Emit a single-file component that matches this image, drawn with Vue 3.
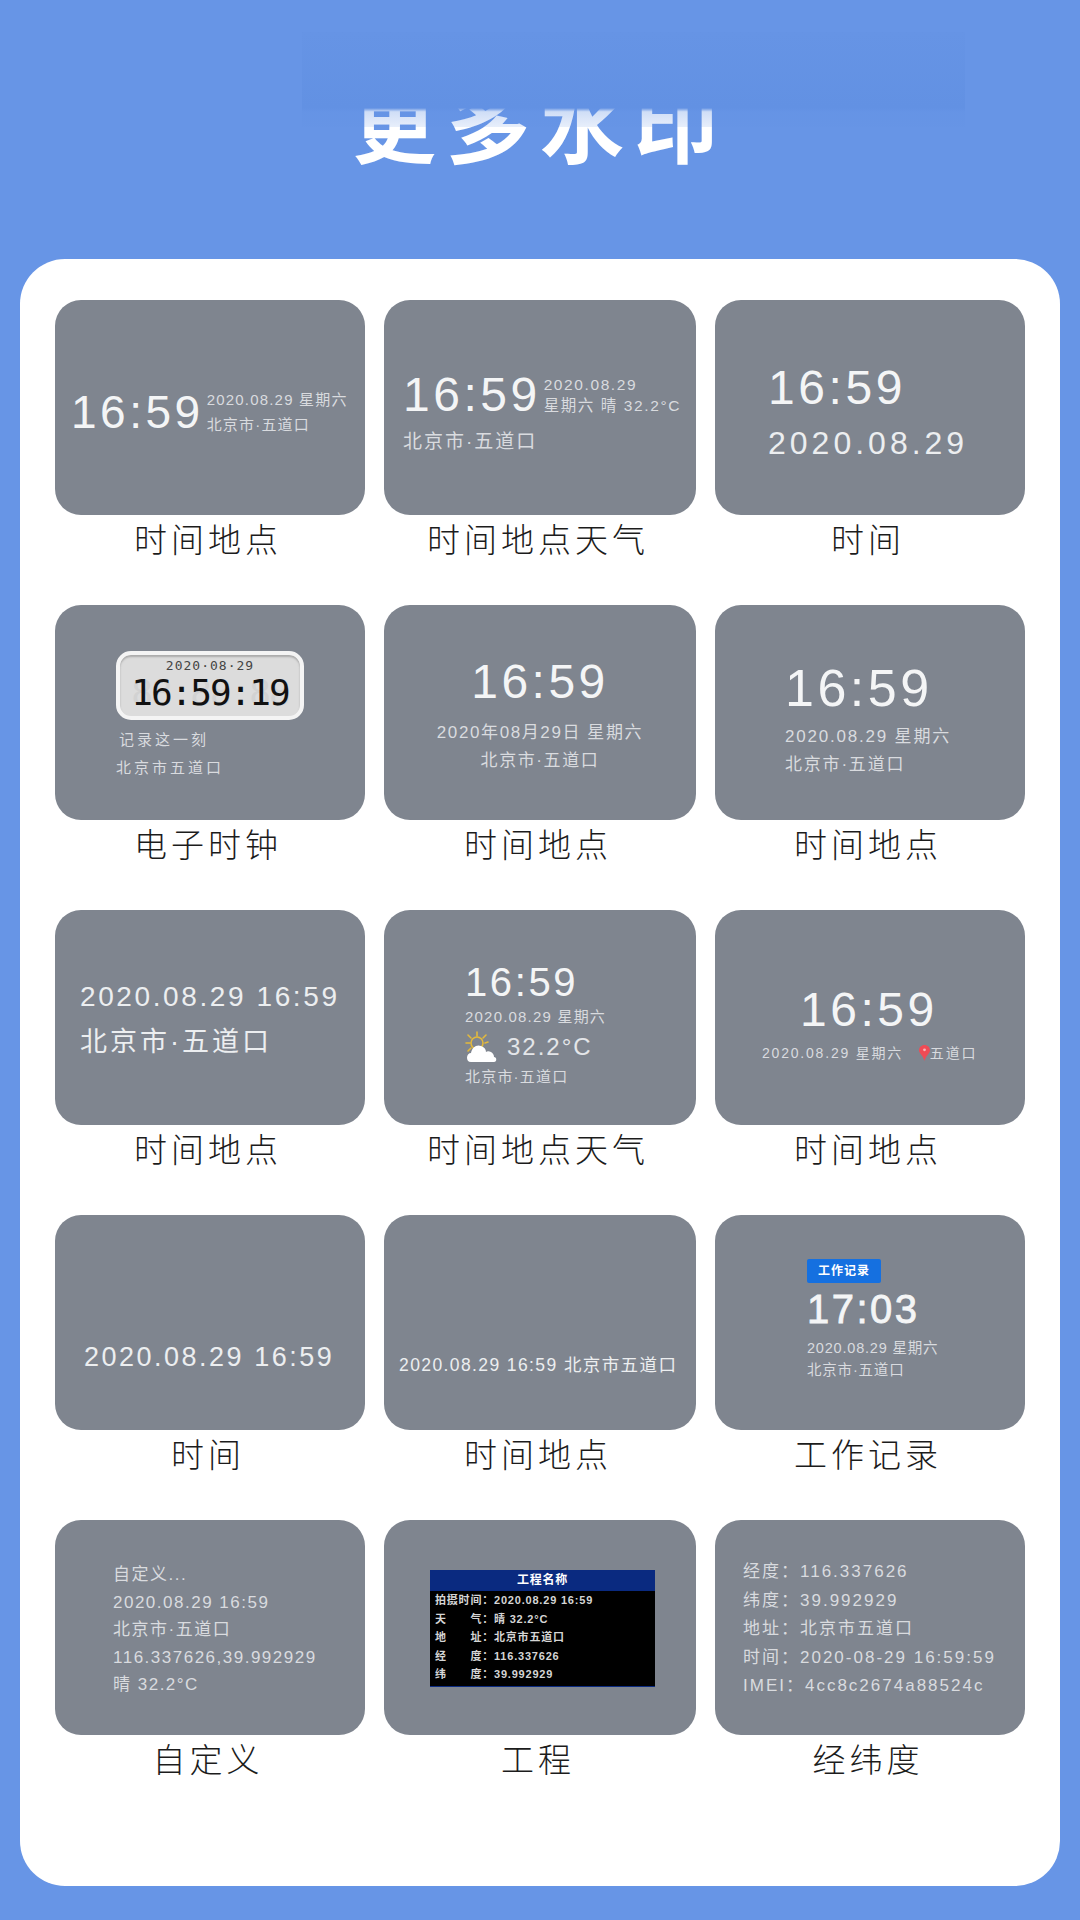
<template>
  <div class="page">
    <header class="head">
      <h1 class="title">更多水印</h1>
      <div class="smudge"></div>
    </header>
    <main class="panel">
      <div class="grid">
        <div class="item">
          <div class="card c1">
            <span class="time">16:59</span>
            <div class="side">
              <p>2020.08.29 星期六</p>
              <p>北京市·五道口</p>
            </div>
          </div>
          <p class="label">时间地点</p>
        </div>
        <div class="item">
          <div class="card c2">
            <div class="c2-top">
              <span class="time">16:59</span>
              <div class="side">
                <p>2020.08.29</p>
                <p>星期六 晴 32.2°C</p>
              </div>
            </div>
            <p class="c2-place">北京市·五道口</p>
          </div>
          <p class="label">时间地点天气</p>
        </div>
        <div class="item">
          <div class="card c3">
            <span class="time">16:59</span>
            <span class="c3-date">2020.08.29</span>
          </div>
          <p class="label">时间</p>
        </div>

        <div class="item">
          <div class="card c4">
            <div class="lcd">
              <span class="lcd-date">2020·08·29</span>
              <span class="lcd-time">16:59:19</span>
              <span class="lcd-ghost">88:88:88</span>
            </div>
            <p class="c4-note">记录这一刻</p>
            <p class="c4-place">北京市五道口</p>
          </div>
          <p class="label">电子时钟</p>
        </div>
        <div class="item">
          <div class="card c5">
            <span class="time">16:59</span>
            <p class="small">2020年08月29日 星期六</p>
            <p class="small">北京市·五道口</p>
          </div>
          <p class="label">时间地点</p>
        </div>
        <div class="item">
          <div class="card c6">
            <span class="time">16:59</span>
            <p class="small">2020.08.29 星期六</p>
            <p class="small">北京市·五道口</p>
          </div>
          <p class="label">时间地点</p>
        </div>

        <div class="item">
          <div class="card c7">
            <p>2020.08.29 16:59</p>
            <p>北京市·五道口</p>
          </div>
          <p class="label">时间地点</p>
        </div>
        <div class="item">
          <div class="card c8">
            <span class="time">16:59</span>
            <p class="small">2020.08.29 星期六</p>
            <div class="weather">
              <svg width="32" height="32" viewBox="0 0 32 32">
                <g stroke="#e3b93c" stroke-width="1.6" stroke-linecap="round">
                  <path d="M12 1v4M3 4l3 3M21 4l-3 3M1 12h4M23 11l-3 1M3 20l3-3" />
                </g>
                <circle cx="12" cy="12" r="6" fill="none" stroke="#e3b93c" stroke-width="1.6" />
                <path d="M4 31c-3 0-4-2-4-4.500s2-4.500 4-4.500c1-6 6-9 10-7 3 1 5 3 5 6 1-1 3-1 5 0s3 3 3 5c3 0 3 5 0 5z" fill="#fff" transform="translate(2 0)" />
              </svg>
              <span>32.2°C</span>
            </div>
            <p class="small">北京市·五道口</p>
          </div>
          <p class="label">时间地点天气</p>
        </div>
        <div class="item">
          <div class="card c9">
            <span class="time">16:59</span>
            <p class="small">
              2020.08.29 星期六
              <svg class="pin" width="11" height="16" viewBox="0 0 11 16">
                <path d="M5.500 0C2.400 0 0 2.300 0 5.200 0 8.500 4 10 5.500 16 7 10 11 8.500 11 5.200 11 2.300 8.600 0 5.500 0z" fill="#ef4b55" />
                <circle cx="5.500" cy="4.800" r="1.400" fill="#f7b5b8" />
              </svg>五道口
            </p>
          </div>
          <p class="label">时间地点</p>
        </div>

        <div class="item">
          <div class="card c10">
            <p>2020.08.29 16:59</p>
          </div>
          <p class="label">时间</p>
        </div>
        <div class="item">
          <div class="card c11">
            <p>2020.08.29 16:59 北京市五道口</p>
          </div>
          <p class="label">时间地点</p>
        </div>
        <div class="item">
          <div class="card c12">
            <span class="badge">工作记录</span>
            <span class="time">17:03</span>
            <p class="small">2020.08.29 星期六</p>
            <p class="small">北京市·五道口</p>
          </div>
          <p class="label">工作记录</p>
        </div>

        <div class="item">
          <div class="card c13">
            <p>自定义...</p>
            <p>2020.08.29 16:59</p>
            <p>北京市·五道口</p>
            <p>116.337626,39.992929</p>
            <p>晴 32.2°C</p>
          </div>
          <p class="label">自定义</p>
        </div>
        <div class="item">
          <div class="card c14">
            <div class="sheet">
              <div class="sheet-head">工程名称</div>
              <div v-for="row in sheetRows" :key="row.key" class="sheet-row">
                <span class="sheet-key">{{ row.key }}</span>
                <span>：{{ row.value }}</span>
              </div>
            </div>
          </div>
          <p class="label">工程</p>
        </div>
        <div class="item">
          <div class="card c15">
            <p>经度：116.337626</p>
            <p>纬度：39.992929</p>
            <p>地址：北京市五道口</p>
            <p>时间：2020-08-29 16:59:59</p>
            <p>IMEI：4cc8c2674a88524c</p>
          </div>
          <p class="label">经纬度</p>
        </div>
      </div>
    </main>
  </div>
</template>

<script setup>
const sheetRows = [
  { key: '拍摄时间', value: '2020.08.29 16:59' },
  { key: '天　　气', value: '晴 32.2°C' },
  { key: '地　　址', value: '北京市五道口' },
  { key: '经　　度', value: '116.337626' },
  { key: '纬　　度', value: '39.992929' }
]
</script>

<style>
html,
body {
  margin: 0;
  background: #6795e6;
}
</style>

<style scoped>
.page {
  width: 1080px;
  height: 1920px;
  overflow: hidden;
  background: #6795e6;
  font-family: "Liberation Sans", "Noto Sans CJK SC", sans-serif;
  color: #fff;
}

p {
  margin: 0;
}

.head {
  position: relative;
  height: 259px;
}

.title {
  margin: 0;
  padding: 80px 0 0 352px;
  font-size: 84px;
  line-height: 96px;
  letter-spacing: 10px;
  font-weight: 700;
}

.smudge {
  position: absolute;
  left: 302px;
  top: 32px;
  width: 663px;
  height: 95px;
  background: linear-gradient(#6694e5, #6291e3 80%, rgba(98, 145, 227, 0.3) 84%, rgba(98, 145, 227, 0.15));
}

.panel {
  margin: 0 20px;
  height: 1627px;
  padding: 41px 35px 0;
  box-sizing: border-box;
  background: #fff;
  border-radius: 45px;
}

.grid {
  display: grid;
  grid-template-columns: 310px 312px 310px;
  column-gap: 19px;
  row-gap: 40px;
}

.card {
  height: 215px;
  box-sizing: border-box;
  background: #7f858f;
  border-radius: 26px;
  display: flex;
  flex-direction: column;
  font-size: 14px;
  color: #d9dbdf;
}

.label {
  height: 50px;
  padding-right: 4px;
  line-height: 52px;
  text-align: center;
  font-size: 33px;
  font-weight: 300;
  letter-spacing: 4px;
  color: #1c1c1c;
}

.time {
  color: #f4f5f6;
  font-size: 46px;
  line-height: 50px;
  letter-spacing: 3.5px;
}

.small {
  font-size: 15px;
  line-height: 28px;
  letter-spacing: 1.2px;
}

.c1 {
  flex-direction: row;
  padding: 87px 0 0 16px;
}

.c1 .time {
  margin-right: 3px;
}

.side {
  font-size: 15px;
  line-height: 25px;
  letter-spacing: 1.2px;
  white-space: nowrap;
}

.c2 {
  padding: 70px 0 0 19px;
}

.c2-top {
  display: flex;
}

.c2-top .time {
  font-size: 48px;
  margin-right: 3px;
}

.c2-top .side {
  padding-top: 4px;
  font-size: 15.5px;
  line-height: 21px;
  letter-spacing: 1.6px;
}

.c2-place {
  font-size: 19px;
  line-height: 24px;
  margin-top: 10px;
  letter-spacing: 2px;
}

.c3 {
  padding: 63px 0 0 53px;
}

.c3 .time {
  font-size: 48px;
  letter-spacing: 3.6px;
}

.c3-date {
  margin-top: 13px;
  font-size: 32px;
  line-height: 34px;
  letter-spacing: 4px;
  color: #eceef0;
}

.c4 {
  padding: 46px 0 0 61px;
}

.lcd {
  position: relative;
  width: 188px;
  height: 69px;
  box-sizing: border-box;
  padding-top: 3px;
  border: 4px solid #f4f4f4;
  border-radius: 15px;
  background: #dcdcdc;
  color: #222;
  display: flex;
  flex-direction: column;
  align-items: center;
  box-shadow: inset 0 2px 2px #aaa;
}

.lcd-date {
  font-family: "DejaVu Sans Mono", monospace;
  font-size: 13px;
  line-height: 16px;
  letter-spacing: 1px;
  color: #444;
}

.lcd-time {
  position: relative;
  z-index: 1;
  font-family: "DejaVu Sans Mono", monospace;
  font-size: 36px;
  line-height: 38px;
  letter-spacing: -2px;
  color: #111;
}

.lcd-ghost {
  position: absolute;
  left: 0;
  right: 0;
  top: 19px;
  text-align: center;
  font-family: "DejaVu Sans Mono", monospace;
  font-size: 36px;
  line-height: 38px;
  letter-spacing: -2px;
  color: #d2d2d2;
}

.c4-note {
  margin: 9px 0 0 3px;
  font-size: 15px;
  line-height: 22px;
  letter-spacing: 3px;
}

.c4-place {
  margin-top: 6px;
  font-size: 15px;
  line-height: 22px;
  letter-spacing: 3px;
}

.c5 {
  align-items: center;
  padding-top: 52px;
}

.c5 .time {
  font-size: 48px;
}

.c5 .small {
  font-size: 17px;
  letter-spacing: 1.6px;
}

.c5 .small:nth-of-type(1) {
  margin-top: 12px;
}

.c6 {
  padding: 58px 0 0 70px;
}

.c6 .time {
  font-size: 52px;
}

.c6 .small {
  font-size: 17px;
  letter-spacing: 1.8px;
}

.c6 .small:nth-of-type(1) {
  margin-top: 10px;
}

.c7 {
  padding: 70px 0 0 25px;
  color: #eceef0;
  white-space: nowrap;
}

.c7 p:nth-child(1) {
  font-size: 28px;
  line-height: 34px;
  letter-spacing: 2.6px;
}

.c7 p:nth-child(2) {
  font-size: 27px;
  line-height: 34px;
  margin-top: 11px;
  letter-spacing: 3px;
}

.c8 {
  padding: 52px 0 0 81px;
}

.c8 .time {
  font-size: 40px;
  line-height: 40px;
  letter-spacing: 2.6px;
}

.c8 .small {
  line-height: 22px;
}

.c8 .small:nth-of-type(1) {
  margin-top: 4px;
}

.weather {
  display: flex;
  align-items: center;
  gap: 10px;
  margin: 1px 0 1px;
  font-size: 24px;
  line-height: 36px;
  letter-spacing: 2px;
  color: #e4e6e9;
}

.c9 {
  padding: 75px 0 0 47px;
}

.c9 .time {
  margin-left: 38px;
  font-size: 48px;
}

.c9 .small {
  margin-top: 4px;
  font-size: 14px;
  letter-spacing: 1.8px;
  white-space: nowrap;
}

.pin {
  margin-left: 10px;
  vertical-align: -3px;
}

.c10 {
  padding: 125px 0 0 29px;
  font-size: 27px;
  line-height: 34px;
  letter-spacing: 2.500px;
  color: #eceef0;
  white-space: nowrap;
}

.c11 {
  padding: 138px 0 0 15px;
  font-size: 17.5px;
  line-height: 24px;
  letter-spacing: 1.4px;
  white-space: nowrap;
  color: #eceef0;
}

.c12 {
  padding: 44px 0 0 92px;
  align-items: flex-start;
}

.badge {
  width: 74px;
  height: 24px;
  border-radius: 2px;
  background: #1570e0;
  color: #fff;
  font-size: 12px;
  font-weight: 700;
  line-height: 24px;
  text-align: center;
  letter-spacing: 1px;
}

.c12 .time {
  margin-top: 6px;
  font-size: 40px;
  line-height: 40px;
  letter-spacing: 2.5px;
  -webkit-text-stroke: 0.8px #f4f5f6;
}

.c12 .small {
  line-height: 22px;
  font-size: 14.5px;
  letter-spacing: 0.8px;
}

.c12 .small:nth-of-type(1) {
  margin-top: 8px;
}

.c13 {
  padding: 41px 0 0 58px;
  font-size: 17px;
  line-height: 27.500px;
  letter-spacing: 1.500px;
  white-space: nowrap;
}

.c14 {
  padding: 50px 0 0 46px;
}

.sheet {
  width: 225px;
  height: 117px;
  box-sizing: border-box;
  background: #000;
  border-bottom: 1px solid #0a2a80;
  font-size: 11px;
  font-weight: 700;
  color: #d5d5d5;
  letter-spacing: 0.8px;
}

.sheet-head {
  height: 21px;
  line-height: 21px;
  background: #0a2a80;
  color: #fff;
  text-align: center;
  font-size: 12px;
}

.sheet-row {
  height: 18.500px;
  line-height: 18.500px;
  padding-left: 5px;
  white-space: nowrap;
}

.c15 {
  padding: 38px 0 0 28px;
  font-size: 17px;
  line-height: 28.600px;
  letter-spacing: 2px;
  white-space: nowrap;
}
</style>
